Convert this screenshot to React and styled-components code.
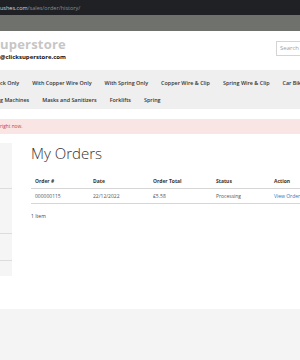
import React from "react";
import styled, { createGlobalStyle } from "styled-components";

const GlobalStyle = createGlobalStyle`
  html, body {
    margin: 0;
    padding: 0;
    background: #fff;
    font-family: "Open Sans", "Liberation Sans", sans-serif;
  }
`;

const navRows = [
  ["ck Only", "With Copper Wire Only", "With Spring Only", "Copper Wire & Clip", "Spring Wire & Clip", "Car Bikes"],
  ["g Machines", "Masks and Sanitizers", "Forklifts", "Spring"],
];

const orders = [
  { id: "000000115", date: "22/12/2022", total: "£5.58", status: "Processing" },
];

function App() {
  return (
    <Page>
      <GlobalStyle />
      <BrowserBar>
        <Url>
          <b>ushes.com</b>/sales/order/history/
        </Url>
      </BrowserBar>
      <ToolStrip />
      <Header>
        <Brand>
          <Logo>uperstore</Logo>
          <Email>@clicksuperstore.com</Email>
        </Brand>
        <Search>Search</Search>
      </Header>
      <Nav>
        {navRows.map((row, i) => (
          <NavRow key={i}>
            {row.map((item) => (
              <NavItem key={item}>{item}</NavItem>
            ))}
          </NavRow>
        ))}
      </Nav>
      <Message>right now.</Message>
      <Main>
        <Sidebar>
          <SideItem $h={45} />
          <SideItem $h={44} />
          <SideItem $h={26} />
        </Sidebar>
        <Content>
          <Title>My Orders</Title>
          <Table>
            <thead>
              <tr>
                <Th $w={50}>Order #</Th>
                <Th $w={52}>Date</Th>
                <Th $w={55}>Order Total</Th>
                <Th $w={50}>Status</Th>
                <Th>Action</Th>
              </tr>
            </thead>
            <tbody>
              {orders.map((o) => (
                <tr key={o.id}>
                  <Td>{o.id}</Td>
                  <Td>{o.date}</Td>
                  <Td>{o.total}</Td>
                  <Td>{o.status}</Td>
                  <Td>
                    <ViewLink>View Order</ViewLink>
                  </Td>
                </tr>
              ))}
            </tbody>
          </Table>
          <Count>1 Item</Count>
        </Content>
      </Main>
      <Footer />
    </Page>
  );
}

export default App;

const Page = styled.div`
  width: 300px;
  height: 360px;
  overflow: hidden;
  display: flex;
  flex-direction: column;
`;

const BrowserBar = styled.div`
  height: 15px;
  background: #202125;
  display: flex;
  align-items: center;
  flex-shrink: 0;
`;

const Url = styled.div`
  font-size: 5.5px;
  color: #8b8c90;
  white-space: nowrap;

  b {
    font-weight: 400;
    color: #d6d6d8;
  }
`;

const ToolStrip = styled.div`
  height: 16px;
  background: #6e716c;
  flex-shrink: 0;
`;

const Header = styled.div`
  height: 39px;
  display: flex;
  justify-content: space-between;
  align-items: flex-start;
  flex-shrink: 0;
`;

const Brand = styled.div`
  display: flex;
  flex-direction: column;
  padding-top: 6px;
`;

const Logo = styled.div`
  font-size: 13px;
  font-weight: 700;
  color: #c6c6c6;
  line-height: 15px;
  letter-spacing: 0.2px;
`;

const Email = styled.div`
  font-size: 6px;
  font-weight: 700;
  color: #111;
  line-height: 9px;
  margin-top: 1px;
`;

const Search = styled.div`
  margin-top: 10px;
  width: 30px;
  height: 15px;
  margin-right: -6px;
  border: 1px solid #d4d4d4;
  box-sizing: border-box;
  font-size: 6px;
  color: #a0a0a0;
  line-height: 13px;
  padding-left: 3px;
  white-space: nowrap;
  overflow: hidden;
`;

const Nav = styled.div`
  height: 39px;
  box-sizing: border-box;
  padding-top: 8px;
  background: #efefef;
  display: flex;
  flex-direction: column;
  gap: 6px;
  flex-shrink: 0;
  overflow: hidden;
`;

const NavRow = styled.div`
  display: flex;
  gap: 13px;
  white-space: nowrap;
`;

const NavItem = styled.span`
  font-size: 5.4px;
  font-weight: 600;
  color: #333;
  line-height: 11px;
`;

const Message = styled.div`
  margin-top: 10px;
  height: 15px;
  background: #fae5e5;
  font-size: 4.8px;
  color: #c43c3c;
  line-height: 15px;
  flex-shrink: 0;
`;

const Main = styled.div`
  margin-top: 9px;
  display: flex;
  gap: 19px;
  flex-shrink: 0;
`;

const Sidebar = styled.div`
  width: 12px;
  height: 133px;
  flex-shrink: 0;
  background: #f5f5f5;
  display: flex;
  flex-direction: column;
`;

const SideItem = styled.div`
  height: ${(p) => p.$h}px;
  border-bottom: 1px solid #dcdcdc;
`;

const Content = styled.div`
  flex: 1;
  min-width: 0;
`;

const Title = styled.h1`
  margin: 0;
  font-size: 15px;
  font-weight: 300;
  color: #333;
  line-height: 20px;
`;

const Table = styled.table`
  margin-top: 12px;
  border-collapse: collapse;
  width: 280px;
`;

const Th = styled.th`
  width: ${(p) => (p.$w ? `${p.$w}px` : "auto")};
  text-align: left;
  font-size: 5px;
  font-weight: 700;
  color: #333;
  padding: 3px 4px 4px;
  border-bottom: 1px solid #d6d6d6;
  white-space: nowrap;
`;

const Td = styled.td`
  font-size: 5px;
  color: #555;
  padding: 4px 4px;
  border-bottom: 1px solid #d6d6d6;
  white-space: nowrap;
`;

const ViewLink = styled.span`
  color: #1979c3;
`;

const Count = styled.div`
  margin-top: 9px;
  font-size: 5px;
  color: #444;
`;

const Footer = styled.div`
  margin-top: auto;
  height: 51px;
  background: #f4f4f4;
  flex-shrink: 0;
`;
